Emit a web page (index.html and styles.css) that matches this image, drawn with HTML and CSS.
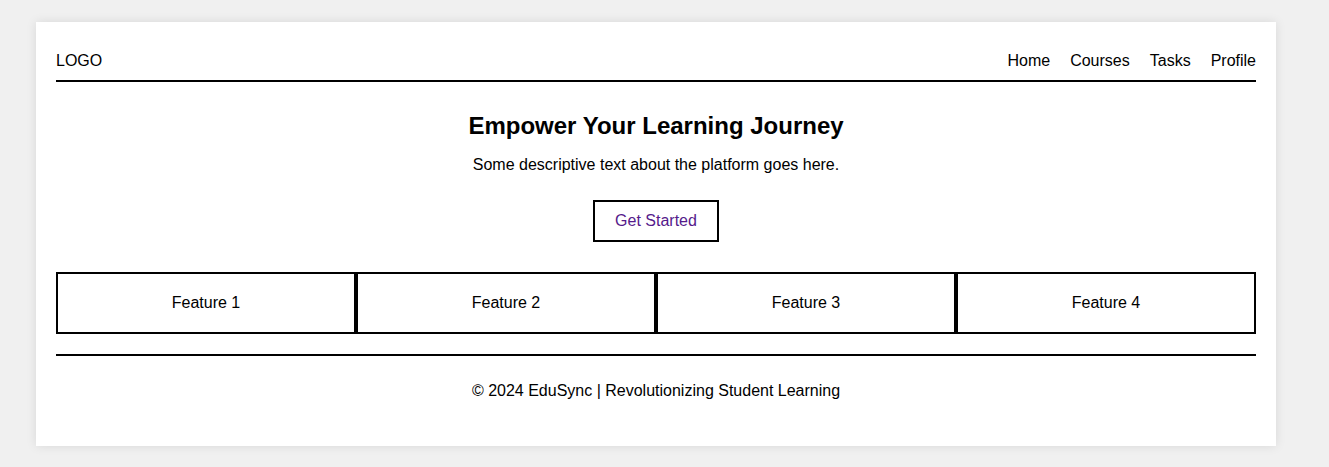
FILE: index.html
```html
<!DOCTYPE html>
<html lang="en">
<head>
<meta charset="utf-8">
<title>EduSync</title>
<link rel="stylesheet" href="styles.css">
</head>
<body>
<div class="card">
  <header class="header">
    <div class="logo">LOGO</div>
    <nav class="nav">
      <span>Home</span>
      <span>Courses</span>
      <span>Tasks</span>
      <span>Profile</span>
    </nav>
  </header>
  <section class="hero">
    <h1 class="hero-title">Empower Your Learning Journey</h1>
    <p class="hero-text">Some descriptive text about the platform goes here.</p>
    <a class="btn">Get Started</a>
  </section>
  <section class="features">
    <div class="feature">Feature 1</div>
    <div class="feature">Feature 2</div>
    <div class="feature">Feature 3</div>
    <div class="feature">Feature 4</div>
  </section>
  <footer class="footer">© 2024 EduSync | Revolutionizing Student Learning</footer>
</div>
</body>
</html>
```
FILE: styles.css
```css
html, body {
  margin: 0;
  padding: 0;
}
body {
  background: #f0f0f0;
  font-family: "Liberation Sans", Arial, sans-serif;
  font-size: 16px;
  color: #000;
  padding: 22px 0 21px 36px;
}
.card {
  width: 1240px;
  box-sizing: border-box;
  background: #fff;
  padding: 20px;
  box-shadow: 0 0 10px rgba(0, 0, 0, 0.1);
}
.header {
  display: flex;
  justify-content: space-between;
  align-items: center;
  padding: 10px 0;
  border-bottom: 2px solid #000;
}
.nav {
  display: flex;
  gap: 20px;
}
.hero {
  text-align: center;
  padding: 30px 0 30px;
}
.hero-title {
  font-size: 24px;
  font-weight: bold;
  margin: 0 0 16px;
}
.hero-text {
  margin: 0 0 26px;
}
.btn {
  display: inline-block;
  padding: 10px 20px;
  border: 2px solid #000;
  color: #551a8b;
}
.features {
  display: grid;
  grid-template-columns: repeat(4, 1fr);
}
.feature {
  border: 2px solid #000;
  padding: 20px;
  text-align: center;
}
.footer {
  margin-top: 20px;
  border-top: 2px solid #000;
  padding: 26px 0 26px;
  text-align: center;
}
```
